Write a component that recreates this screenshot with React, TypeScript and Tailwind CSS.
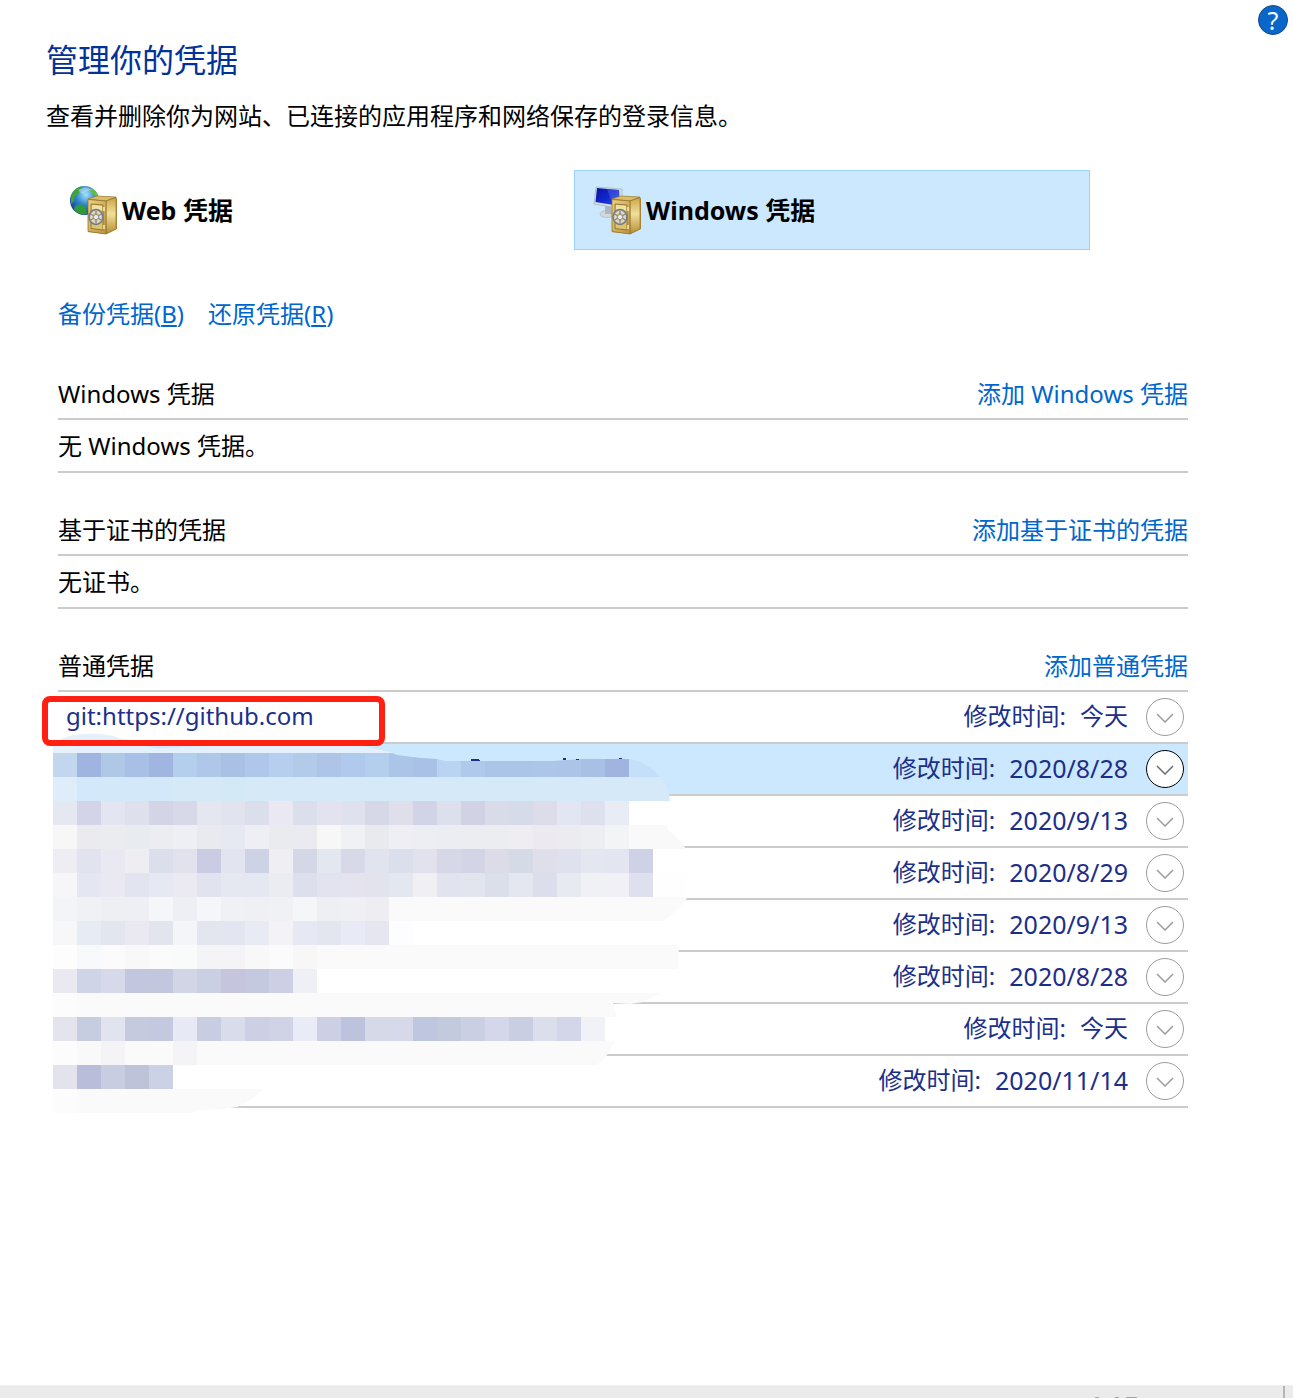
import React, { useState } from "react";

interface Credential {
    name: string;
    modified: string;
}

interface MosaicRow {
    rest: string;
    cells: string[];
}

const credentials: Credential[] = [
    { name: "git:https://github.com", modified: "今天" },
    { name: "", modified: "2020/8/28" },
    { name: "", modified: "2020/9/13" },
    { name: "", modified: "2020/8/29" },
    { name: "", modified: "2020/9/13" },
    { name: "", modified: "2020/8/28" },
    { name: "", modified: "今天" },
    { name: "", modified: "2020/11/14" },
];

const CELL = 24;

// One entry per 24px band, "rest" fills the band after its last cell
const mosaic: MosaicRow[] = [
    { rest: "#e4f1fc", cells: ["#e6f1fa"] },
    {
        rest: "#c3dffa",
        cells: [
            "#c2d6ee", "#9fb5df", "#aec8e6", "#a9c0e6", "#a0b5df", "#b4ceed", "#afc8ea", "#a9c1e5",
            "#aec7ea", "#b7cfee", "#b1cbe9", "#aec5e8", "#b0c9ec", "#b4cfee", "#abc5e8", "#a9c1e6",
            "#b9d4f2", "#afc9ea", "#abc5e7", "#abc5e7", "#acc6e8", "#abc4e7", "#a9c0e5", "#a1b4df",
        ],
    },
    {
        rest: "#d5e9f9",
        cells: ["#dfedfa", "#d4e8fb", "#d3e9f9", "#d3e9f9", "#d3e9f9", "#d5e9f7", "#d6e9f7", "#d3e9f6", "#d6e9f7"],
    },
    {
        rest: "#ffffff",
        cells: [
            "#e5e7f1", "#d3d4e7", "#e3e6f0", "#dee0ec", "#d3d4e6", "#d8d9e8", "#e4e7f0", "#e1e3ee",
            "#dbdeeb", "#e9e8f3", "#dbdfec", "#e2e3ef", "#dfe1ed", "#d7d8e7", "#dedfea", "#d1d4e6",
            "#dcdfec", "#d1d3e5", "#d9dbe8", "#d5dbe9", "#dcdde9", "#e2e6f2", "#dee1ed", "#e8ecf5",
        ],
    },
    {
        rest: "#f9f9f9",
        cells: [
            "#f7f7f8", "#ebebef", "#ebecef", "#e8ebef", "#ecedf1", "#eeeff4", "#e9eaef", "#e6e9f1",
            "#eeeff4", "#eaebef", "#ebeaf0", "#f7f7f7", "#f0f1f4", "#e9eaee", "#efeef4", "#edeef3",
            "#ecedf2", "#ebedf1", "#ecedf1", "#efecf2", "#eceaf0", "#ebebf0", "#edeef1", "#f3f4f6",
        ],
    },
    {
        rest: "#ffffff",
        cells: [
            "#ededf3", "#e1e3ef", "#eae9f3", "#ededf2", "#dbdfeb", "#e1e2ec", "#c9cce2", "#e2e5f0",
            "#cdd3e4", "#efeff3", "#d4d7e6", "#e3e7f0", "#d7d9e8", "#e1e3ef", "#dbdfec", "#e1e2ee",
            "#d6d8e7", "#d4d4e7", "#dcdce9", "#d5dae7", "#dedfeb", "#dfe1ee", "#e4e7f0", "#e3e6f1",
            "#cfd1e6",
        ],
    },
    {
        rest: "#fefefe",
        cells: [
            "#f6f6f8", "#e4e6f1", "#eae9f2", "#e2e4ef", "#e7e9f2", "#ebe9f2", "#e1e3ef", "#e5e7f1",
            "#e5e7f1", "#ebecf2", "#dedfec", "#e2e3ef", "#e5e3ed", "#e3e3ed", "#e3e7f0", "#efeff4",
            "#e1e3ef", "#e2e4ee", "#dbdfea", "#e4e7f0", "#dcdfeb", "#e7eaf1", "#f0f1f5", "#f0f0f6",
            "#dfe0ed",
        ],
    },
    {
        rest: "#fafafa",
        cells: [
            "#f3f4f7", "#f0f1f4", "#eeeff3", "#eeeff4", "#f5f6f9", "#edeff4", "#f5f6f9", "#f0f1f4",
            "#f0eff3", "#f0f1f4", "#f5f6f8", "#eeeff3", "#f0eff4", "#eeeef2",
        ],
    },
    {
        rest: "#ffffff",
        cells: [
            "#f7f7f9", "#e7ebf3", "#e3e6ef", "#eae9f2", "#e3e5ee", "#f4f5f8", "#e3e6ef", "#e3e6f0",
            "#e8ebf4", "#f3f2f6", "#e6e9f3", "#e3e6ef", "#e8ebf5", "#e6e6f1", "#fdfdff",
        ],
    },
    {
        rest: "#fafafa",
        cells: [
            "#fdfdfd", "#f7f9fb", "#fbfbfb", "#f8f8f8", "#fbfbfb", "#f8fbfa", "#f4f4f7", "#f4f4f7",
            "#f8f8f8", "#fbfbfb", "#f7f7f7",
        ],
    },
    {
        rest: "#ffffff",
        cells: [
            "#eae9f2", "#d0d4e7", "#d5d9e9", "#c2c7df", "#c3c7dd", "#d2d5e6", "#cbcfe3", "#c5c6dd",
            "#c4c9e0", "#cdd0e5", "#eff0f6",
        ],
    },
    { rest: "#fafafa", cells: ["#fcfcfc"] },
    {
        rest: "#ffffff",
        cells: [
            "#e3e4ed", "#c6cde1", "#e1e4ef", "#c5cadf", "#c4c9e0", "#e7eaf4", "#c8cde1", "#d9dceb",
            "#cdd0e5", "#d0d3e6", "#e9ecf6", "#cdcfe4", "#bdc2dd", "#d6dae8", "#d6d9e9", "#bfc6df",
            "#c4cade", "#cbcfe3", "#d4d7e9", "#c9cee3", "#dbdeeb", "#d3d6e8", "#f1f2f8",
        ],
    },
    { rest: "#fafafa", cells: ["#fcfcfc", "#f9f9f9", "#f4f4f6", "#fafafa", "#fafafa", "#f4f4f6"] },
    { rest: "#ffffff", cells: ["#e2e3ed", "#b9bdd9", "#c9cde2", "#bfc3da", "#ccd2e6"] },
    { rest: "#fafafa", cells: ["#fcfcfc"] },
];

const Mosaic = () => {
    return (
        <svg
            className="absolute top-[37px] left-[-5px] pointer-events-none"
            width="648"
            height="384"
            viewBox="0 0 648 384"
            shapeRendering="crispEdges"
            aria-hidden="true"
        >
            <defs>
                <clipPath id="brush">
                    <path d="M0 14 L7 11 C22 3 52 3 69 10 C85 15 98 20 112 19 L154 17 L310 17 L337 23 L344 26 L367 29 L384 30 L392 32 H500 L530 30 H577 C594 33 611 47 616 64 L617 72 L615 75 L614 96 L615 101 L622 106 L633 120 L634 169 Q625 183 610 192 L626 216 L625 240 L608 264 L590 273 L577 275 L560 274 L564 288 L562 312 L554 326 L544 336 L210 360 Q198 373 184 378 L170 380 L149 381 L137 384 H0 Z" />
                </clipPath>
            </defs>
            <g clipPath="url(#brush)">
                {mosaic.map((row, r) => (
                    <g key={`row-${r}`}>
                        <rect x="0" y={r * CELL} width="648" height={CELL} fill={row.rest} />
                        {row.cells.map((color, c) => (
                            <rect key={`cell-${r}-${c}`} x={c * CELL} y={r * CELL} width={CELL} height={CELL} fill={color} />
                        ))}
                    </g>
                ))}
            </g>
            <path d="M418 30h7l3 2h-10zM510 29h3v2h-3zM523 30h3v1h-3zM566 29h3v1h-3z" fill="#1b2f8a" />
        </svg>
    );
};

const Safe = () => {
    return (
        <g>
            <path d="M19 14 L28 11 L47 12 L48 14 V44 L37 49 L19 47 Z" fill="#b08b38" />
            <path d="M19 14 L28 11 L47 12 L37 16 Z" fill="#d8bd6c" stroke="#9b7b2e" strokeWidth="0.6" />
            <path d="M37 16 L47 12.5 V44 L37 49 Z" fill="url(#safeSide)" stroke="#94752c" strokeWidth="0.7" />
            <path d="M19 14.5 L37 16 V49 L19 46.5 Z" fill="url(#safeFront)" stroke="#94752c" strokeWidth="0.8" />
            <path d="M22 19 L34 20 V45 L22 43.5 Z" fill="#dcc36f" stroke="#8e7029" strokeWidth="0.9" />
            <path d="M23 20 L33 21 V25 L23 32 Z" fill="#f1e2a4" />
            <path d="M35 22v4M35 40v4" stroke="#f7eab6" strokeWidth="1.5" />
            <ellipse cx="27" cy="32" rx="7" ry="7.5" fill="#b9b9b5" stroke="#777a7c" strokeWidth="1.4" />
            <ellipse cx="27" cy="32" rx="5" ry="5.5" fill="#dfcf96" stroke="#f1f1ee" strokeWidth="0.8" />
            <path d="M27 26v12M21.5 29l11 6M21.5 35l11-6" stroke="#84888a" strokeWidth="1.4" />
            <circle cx="27" cy="32" r="2.6" fill="#ececec" stroke="#7d8285" strokeWidth="0.8" />
        </g>
    );
};

const SafeGradients = () => {
    return (
        <>
            <linearGradient id="safeFront" x1="0" y1="0" x2="1" y2="1">
                <stop offset="0" stopColor="#e9d38a" />
                <stop offset="1" stopColor="#b8923e" />
            </linearGradient>
            <linearGradient id="safeSide" x1="0" y1="0" x2="0" y2="1">
                <stop offset="0" stopColor="#c9a549" />
                <stop offset="0.45" stopColor="#f1df9a" />
                <stop offset="1" stopColor="#b58c34" />
            </linearGradient>
        </>
    );
};

const WebIcon = () => {
    return (
        <svg width="50" height="50" viewBox="0 0 50 50" aria-hidden="true">
            <defs>
                <SafeGradients />
                <radialGradient id="globe" cx="0.55" cy="0.3" r="0.7">
                    <stop offset="0" stopColor="#9fe3fb" />
                    <stop offset="0.5" stopColor="#2f83cf" />
                    <stop offset="1" stopColor="#15388e" />
                </radialGradient>
            </defs>
            <circle cx="15.5" cy="15.5" r="14.5" fill="url(#globe)" />
            <path d="M2 12 C3 6 8 2 13 1.5 L14 3 L11 5 L10 8 L6 11 L5 16 L2 19 Z" fill="#3fa535" />
            <path d="M22 3 C26 5 29 9 29.5 12 L26 11 L21 6 Z" fill="#66bf37" />
            <path d="M6 21 L12 19 L17 22 L18 29 C12 31 7 27 5 24 Z" fill="#2f9a3a" />
            <path d="M9 5 Q16 0 23 5 Q17 6 14 9 Q11 8 9 5Z" fill="#ffffff" opacity="0.3" />
            <Safe />
        </svg>
    );
};

const WindowsIcon = () => {
    return (
        <svg width="50" height="50" viewBox="0 0 50 50" aria-hidden="true">
            <defs>
                <SafeGradients />
                <linearGradient id="screen" x1="0" y1="0" x2="1" y2="1">
                    <stop offset="0" stopColor="#0714a0" />
                    <stop offset="0.5" stopColor="#1027cf" />
                    <stop offset="1" stopColor="#3157e2" />
                </linearGradient>
            </defs>
            <ellipse cx="14" cy="29" rx="7" ry="3.5" fill="#d3d8dd" stroke="#a7b0b8" strokeWidth="0.6" />
            <path d="M12 20h6l1 9h-7z" fill="#aeb7bf" />
            <path d="M3 2 L29 4 L29 24 L1 19 Z" fill="#d5dde5" stroke="#a3afba" strokeWidth="0.7" />
            <path d="M4 3 L26 5 L27 21 L2.5 17 Z" fill="url(#screen)" />
            <path d="M14 4 L26 5 L27 21 L20 20 Z" fill="#6a86f0" opacity="0.35" />
            <Safe />
        </svg>
    );
};

const Expander = ({ active, label, onClick }: any) => {
    return (
        <button
            type="button"
            aria-label={label}
            onClick={onClick}
            className={`mr-1 ml-[18px] flex h-[38px] w-[38px] items-center justify-center rounded-full border bg-white ${active ? "border-black text-[#6e6e6e]" : "border-[#9c9c9c] text-[#9c9c9c]"
                }`}
        >
            <svg width="18" height="12" viewBox="0 0 18 12" fill="none" stroke="currentColor" strokeWidth="1.5" aria-hidden="true">
                <path d="M1 3 L9 11 L17 3" />
            </svg>
        </button>
    );
};

const SectionHeader = ({ title, action }: { title: string; action: string }) => {
    return (
        <div className="flex h-[50px] items-center justify-between border-b-2 border-[#cbcbcb]">
            <h2>{title}</h2>
            <a href="#" className="text-[#0066cc]">{action}</a>
        </div>
    );
};

const App: React.FC = () => {
    const [selected, setSelected] = useState(1);

    return (
        <div className="flex min-h-screen flex-col bg-white font-['Noto_Sans','Noto_Sans_CJK_SC',sans-serif] text-2xl leading-8 text-black">
            <a
                href="#"
                aria-label="帮助"
                className="absolute top-[5px] right-[5px] flex h-[30px] w-[30px] items-center justify-center rounded-full border border-[#12488c] bg-[#0a66c8] text-[25px] text-white"
            >
                ?
            </a>

            <main className="pt-10 pr-[105px] pb-10 pl-[58px]">
                <div className="-ml-3">
                    <h1 className="text-[32px] leading-10 text-[#003399]">管理你的凭据</h1>
                    <p className="mt-5">查看并删除你为网站、已连接的应用程序和网络保存的登录信息。</p>
                </div>

                <div className="mt-[38px] mr-[98px] grid grid-cols-2 text-[25px] font-bold">
                    <button type="button" className="flex h-20 items-center border border-transparent pl-[10px]">
                        <WebIcon />
                        <span className="ml-[3px]">Web 凭据</span>
                    </button>
                    <button type="button" className="flex h-20 items-center border border-[#99d1ff] bg-[#cce8ff] pl-[18px]">
                        <WindowsIcon />
                        <span className="ml-[3px]">Windows 凭据</span>
                    </button>
                </div>

                <nav className="mt-12 flex gap-6 text-[#0066cc]">
                    <a href="#">备份凭据(<u>B</u>)</a>
                    <a href="#">还原凭据(<u>R</u>)</a>
                </nav>

                <section className="mt-10">
                    <SectionHeader title="Windows 凭据" action="添加 Windows 凭据" />
                    <p className="flex h-[53px] items-center border-b-2 border-[#cbcbcb]">无 Windows 凭据。</p>
                </section>

                <section className="mt-[33px]">
                    <SectionHeader title="基于证书的凭据" action="添加基于证书的凭据" />
                    <p className="flex h-[53px] items-center border-b-2 border-[#cbcbcb]">无证书。</p>
                </section>

                <section className="mt-[33px]">
                    <SectionHeader title="普通凭据" action="添加普通凭据" />
                    <div className="relative">
                        <ul className="text-[#1b2f8a]">
                            {credentials.map((item, index) => (
                                <li
                                    key={`credential-${index}`}
                                    className={`flex h-[52px] items-center border-b-2 border-[#cbcbcb] pl-2 ${selected === index ? "bg-[#cce8ff]" : ""
                                        }`}
                                >
                                    <span className="pb-[2px]">{item.name}</span>
                                    <span className="ml-auto pb-[2px]">修改时间:</span>
                                    <span className={`ml-[14px] pb-[2px] ${item.modified === "今天" ? "" : "text-[25px]"}`}>{item.modified}</span>
                                    <Expander active={selected === index} label={`展开 ${item.modified}`} onClick={() => setSelected(index)} />
                                </li>
                            ))}
                        </ul>
                        <Mosaic />
                        {/* Marker around the first entry */}
                        <div className="pointer-events-none absolute top-1 left-[-16px] h-[50px] w-[343px] rounded-lg border-[6px] border-[#ff2012]" />
                    </div>
                </section>
            </main>

            <footer className="mt-auto flex h-[13px] justify-end border-t border-[#f0f0f0] bg-[#ebebeb]">
                <svg className="mr-[146px] self-end" width="42" height="2" viewBox="0 0 42 2" aria-hidden="true">
                    <path d="M0 1h4v1H0zM20 1h4v1h-4zM31 1h11v1H31z" fill="#a5a5a5" />
                </svg>
                <div className="mr-2 w-[2px] bg-[#b5b5b5]" />
            </footer>
        </div>
    );
};

export default App;
